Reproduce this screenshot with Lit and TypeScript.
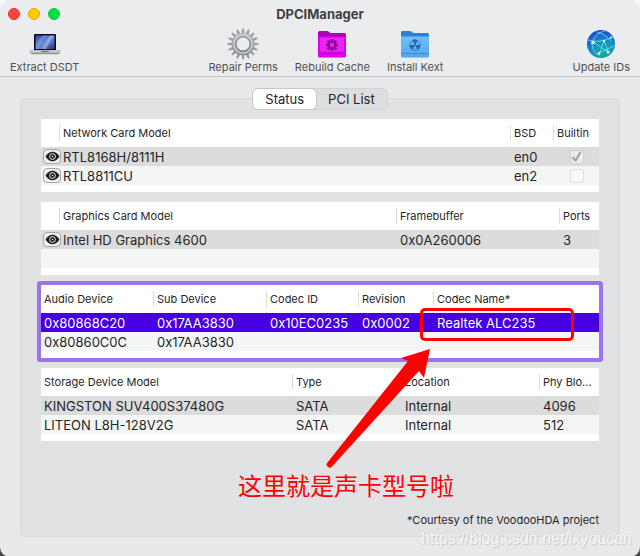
import { LitElement, html, svg, css, nothing } from "lit";
import { customElement, property, state } from "lit/decorators.js";
import { classMap } from "lit/directives/class-map.js";
import { styleMap } from "lit/directives/style-map.js";

type Cell = string | { eye: string } | { check: boolean; label: string };

interface Column {
  title: string;
  width?: number;
  kind?: "eye" | "check";
}

interface DeviceList {
  name: string;
  columns: Column[];
  rows: Cell[][];
}

const NETWORK: DeviceList = {
  name: "Network cards",
  columns: [
    { title: "", width: 19, kind: "eye" },
    { title: "Network Card Model" },
    { title: "BSD", width: 43 },
    { title: "Builtin", width: 45, kind: "check" },
  ],
  rows: [
    [{ eye: "RTL8168H/8111H" }, "RTL8168H/8111H", "en0", { check: true, label: "en0 built in" }],
    [{ eye: "RTL8811CU" }, "RTL8811CU", "en2", { check: false, label: "en2 built in" }],
  ],
};

const GRAPHICS: DeviceList = {
  name: "Graphics cards",
  columns: [
    { title: "", width: 19, kind: "eye" },
    { title: "Graphics Card Model" },
    { title: "Framebuffer", width: 163 },
    { title: "Ports", width: 39 },
  ],
  rows: [
    [{ eye: "Intel HD Graphics 4600" }, "Intel HD Graphics 4600", "0x0A260006", "3"],
    ["", "", "", ""],
  ],
};

const AUDIO: DeviceList = {
  name: "Audio devices",
  columns: [
    { title: "Audio Device", width: 113 },
    { title: "Sub Device", width: 113 },
    { title: "Codec ID", width: 92 },
    { title: "Revision", width: 75 },
    { title: "Codec Name*" },
  ],
  rows: [
    ["0x80868C20", "0x17AA3830", "0x10EC0235", "0x0002", "Realtek ALC235"],
    ["0x80860C0C", "0x17AA3830", "", "", ""],
  ],
};

const STORAGE: DeviceList = {
  name: "Storage devices",
  columns: [
    { title: "Storage Device Model" },
    { title: "Type", width: 109 },
    { title: "Location", width: 138 },
    { title: "Phy Blo...", width: 59 },
  ],
  rows: [
    ["KINGSTON SUV400S37480G", "SATA", "Internal", "4096"],
    ["LITEON L8H-128V2G", "SATA", "Internal", "512"],
  ],
};

@customElement("device-table")
export class DeviceTable extends LitElement {
  @property({ attribute: false }) list!: DeviceList;
  @property({ type: Boolean }) focused = false;

  static styles = css`
    :host {
      display: block;
      background: #fff;
      padding-bottom: 7px;
    }
    :host([focused]) {
      box-shadow: 0 0 0 4px #9a73ee;
      border-radius: 1px;
    }
    .table {
      width: 100%;
      table-layout: fixed;
      border-collapse: collapse;
    }
    .head,
    .cell {
      box-sizing: border-box;
      padding: 0 0 0 3px;
      text-align: left;
      white-space: nowrap;
    }
    .head {
      height: 28px;
      font-size: 11px;
      font-weight: 400;
      line-height: 16px;
      color: #262626;
      background:
        linear-gradient(#dcdcdc, #dcdcdc) right 6px / 1px 16px no-repeat,
        linear-gradient(#dcdcdc, #dcdcdc) right bottom / 1px 1px no-repeat;
    }
    .head:last-child {
      background: none;
    }
    .cell {
      height: 19px;
      padding-top: 2px;
      font-size: 13px;
      line-height: 17px;
      color: #262626;
    }
    .row {
      background: #f4f5f5;
    }
    .row.selected {
      background: #dcdcdc;
    }
    .row.active {
      background: #4600e1;
    }
    .row.active .cell {
      color: #fff;
    }
    .cell.eye {
      padding: 0 0 0 2px;
    }
    .cell.check {
      padding: 0;
      text-align: center;
    }
    .eye-button {
      display: flex;
      align-items: center;
      justify-content: center;
      box-sizing: border-box;
      width: 18px;
      height: 15px;
      margin: 0;
      padding: 0;
      border: 1px solid #a6a6a6;
      border-radius: 4px;
      background: #eeefef;
      color: #1d1d1d;
    }
    .eye-icon {
      display: block;
      width: 15px;
      height: 11px;
      flex: none;
    }
    .tick {
      appearance: none;
      display: block;
      box-sizing: border-box;
      width: 14px;
      height: 14px;
      margin: 0 auto;
      border: 1px solid #dedede;
      border-radius: 3px;
      background: #f9f9f9;
    }
    .tick:checked {
      border-color: #cfcfcf;
      background: #ededed;
    }
    .tick:checked::before {
      content: "";
      display: block;
      width: 12px;
      height: 12px;
      background: #a6a6a6;
      clip-path: polygon(9px 1px, 11px 2px, 6px 11px, 4px 11px, 1px 7px, 3px 6px, 5px 8px);
    }
  `;

  private renderCell(cell: Cell) {
    if (typeof cell === "string") return cell || nothing;
    if ("eye" in cell) {
      return html`<button class="eye-button" aria-label="Show ${cell.eye}">
        <svg class="eye-icon" viewBox="0 0 15 11" aria-hidden="true">
          <path d="M.5 5.500C2.300 2.300 4.700.700 7.500.700s5.200 1.600 7 4.800c-1.800 3.200-4.200 4.800-7 4.800S2.300 8.700.5 5.500Z" fill="currentColor" />
          <circle cx="7.500" cy="5.500" r="2.900" fill="none" stroke="#eeefef" stroke-width="1" />
          <circle cx="7.500" cy="5.500" r=".8" fill="#eeefef" />
        </svg>
      </button>`;
    }
    return html`<input class="tick" type="checkbox" disabled aria-label=${cell.label} .checked=${cell.check} />`;
  }

  render() {
    const { name, columns, rows } = this.list;
    return html`<table class="table" aria-label=${name}>
      <colgroup>
        ${columns.map((c) => html`<col style=${styleMap(c.width ? { width: `${c.width}px` } : {})} />`)}
      </colgroup>
      <thead>
        <tr>${columns.map((c) => html`<th class="head" scope="col">${c.title}</th>`)}</tr>
      </thead>
      <tbody>
        ${rows.map(
          (row, r) => html`<tr class=${classMap({ row: true, selected: r === 0, active: r === 0 && this.focused })}>
            ${row.map(
              (cell, i) => html`<td
                class=${classMap({ cell: true, eye: columns[i].kind === "eye", check: columns[i].kind === "check" })}
              >${this.renderCell(cell)}</td>`,
            )}
          </tr>`,
        )}
      </tbody>
    </table>`;
  }
}

const GEAR_TEETH = Array.from({ length: 16 }, (_, i) => i * 22.5);
const CACHE_TEETH = Array.from({ length: 8 }, (_, i) => i * 45);

const laptopIcon = html`<svg class="icon" viewBox="0 0 32 32" aria-hidden="true">
  <defs>
    <linearGradient id="screen" x1="0" y1="0" x2="1" y2="1">
      <stop offset="0" stop-color="#3a3fa8" />
      <stop offset=".5" stop-color="#6a8bd8" />
      <stop offset="1" stop-color="#2b2f86" />
    </linearGradient>
    <linearGradient id="base" x1="0" y1="0" x2="0" y2="1">
      <stop offset="0" stop-color="#ececec" />
      <stop offset="1" stop-color="#8d8d8d" />
    </linearGradient>
  </defs>
  <path d="M5 7Q5 6 6 6H26q1 0 1 1V22H5Z" fill="#0c0c12" />
  <rect x="6.500" y="7.500" width="19" height="13.500" fill="url(#screen)" />
  <path d="M12 21 21 7.500h3.500L17 21Z" fill="#a9c4f0" opacity=".55" />
  <path d="M7 14.500q5-5 8-7h3Q12 13.500 9 21H7Z" fill="#8fb0ec" opacity=".4" />
  <path d="M1 22.500h30v2q-1 1.500-3 1.500H4Q2 26 1 24.500Z" fill="url(#base)" stroke="#7b7b7b" stroke-width=".4" />
  <rect x="12" y="23" width="8" height="1" rx=".5" fill="#6c6c6c" />
</svg>`;

const gearIcon = html`<svg class="icon" viewBox="0 0 32 32" aria-hidden="true">
  <defs>
    <linearGradient id="steel" x1="0" y1="0" x2="0" y2="1">
      <stop offset="0" stop-color="#b7bcc1" />
      <stop offset="1" stop-color="#85898e" />
    </linearGradient>
  </defs>
  <g fill="#9a9fa4">
    ${GEAR_TEETH.map((a) => svg`<path d="M14.300 6 15.200.4h1.600L17.700 6Z" transform="rotate(${a} 16 16)" />`)}
  </g>
  <circle cx="16" cy="16" r="9" fill="none" stroke="url(#steel)" stroke-width="4.600" />
  <circle cx="16" cy="16" r="9.200" fill="none" stroke="#c9cdd1" stroke-width="1.600" />
  <circle cx="16" cy="16" r="7" fill="none" stroke="#777b80" stroke-width=".8" />
</svg>`;

const cacheIcon = html`<svg class="icon" viewBox="0 0 32 32" aria-hidden="true">
  <path d="M2 4.500Q2 3 3.500 3H11q1 0 2 1t2 1H28.500Q30 5 30 6.500V27H2Z" fill="#ab00b5" />
  <path d="M2 8.500H30V28q0 1.500-1.500 1.500h-25Q2 29.500 2 28Z" fill="#de00ea" />
  <rect x="4" y="9.500" width="24" height="14" fill="#f23cf6" opacity=".6" />
  <rect x="2" y="25" width="28" height="1" fill="#b800c2" />
  <g fill="#8f009c">
    ${CACHE_TEETH.map((a) => svg`<rect x="14.700" y="11" width="2.600" height="3" transform="rotate(${a} 16 17)" />`)}
  </g>
  <circle cx="16" cy="17" r="3.300" fill="none" stroke="#8f009c" stroke-width="2.200" />
</svg>`;

const kextIcon = html`<svg class="icon" viewBox="0 0 32 32" aria-hidden="true">
  <defs>
    <linearGradient id="folder" x1="0" y1="0" x2="0" y2="1">
      <stop offset="0" stop-color="#6fc0fa" />
      <stop offset="1" stop-color="#55a5ec" />
    </linearGradient>
  </defs>
  <path d="M2 4.500Q2 3 3.500 3H11q1 0 2 1t2 1H28.500Q30 5 30 6.500V27H2Z" fill="#2d7fd0" />
  <path d="M2 8.500H30V28q0 1.500-1.500 1.500h-25Q2 29.500 2 28Z" fill="url(#folder)" />
  <rect x="2" y="25" width="28" height="1" fill="#3c8ad6" />
  <circle cx="16" cy="17" r="5.200" fill="none" stroke="#2f77bd" stroke-width=".9" />
  <g fill="#2766a8">
    <path d="M15.400 16 13.300 12.400a5.300 5.300 0 0 1 5.400 0L16.600 16Z" />
    <path d="M15.400 16 13.300 12.400a5.300 5.300 0 0 1 5.400 0L16.600 16Z" transform="rotate(120 16 17)" />
    <path d="M15.400 16 13.300 12.400a5.300 5.300 0 0 1 5.400 0L16.600 16Z" transform="rotate(240 16 17)" />
    <circle cx="16" cy="17" r=".9" />
  </g>
</svg>`;

const globeIcon = html`<svg class="icon" viewBox="0 0 32 32" aria-hidden="true">
  <defs>
    <radialGradient id="globe" cx=".6" cy=".8" r=".85">
      <stop offset="0" stop-color="#0fb09a" />
      <stop offset=".5" stop-color="#1391c4" />
      <stop offset="1" stop-color="#2440cf" />
    </radialGradient>
  </defs>
  <circle cx="16" cy="16" r="14" fill="url(#globe)" />
  <g fill="none" stroke="#7fdcf8" stroke-width=".8" stroke-linecap="round">
    <path d="M3 12Q14 16 28 9" />
    <path d="M7 15Q10 5 20 3" />
    <path d="M8 14 25 25" />
    <path d="M19 13 14 27" />
    <path d="M19 13Q23 20 23 26" />
    <path d="M7 15Q7 22 12 27" />
    <path d="M12 4Q20 6 26 13" />
    <path d="M13 25Q21 22 29 18" />
  </g>
  <g fill="#d9fbff">
    <circle cx="8" cy="14.500" r="1.800" />
    <circle cx="19" cy="13" r="1.200" />
    <circle cx="14" cy="25.500" r="1.400" />
    <circle cx="23" cy="24" r="1.400" />
    <circle cx="26" cy="9.500" r="1.100" />
  </g>
</svg>`;

@customElement("app-root")
export class AppRoot extends LitElement {
  @state() private tab = "Status";

  static styles = css`
    :host {
      display: block;
      background: linear-gradient(#f8f8f8 50%, #4b4b4b 50%);
      font-family: Inter, "Noto Sans CJK SC", sans-serif;
      color: #262626;
    }
    .window {
      position: relative;
      min-height: 100vh;
      box-sizing: border-box;
      border-radius: 10px;
      overflow: hidden;
      background: #e8e9eb;
    }
    .chrome {
      background: #ebecee;
      border-bottom: 1px solid #c3c4c6;
    }
    .titlebar {
      display: grid;
      grid-template-columns: 1fr auto 1fr;
      align-items: center;
      height: 28px;
      padding: 0 8px;
    }
    .lights {
      display: flex;
      gap: 8px;
    }
    .light {
      box-sizing: border-box;
      width: 12px;
      height: 12px;
      padding: 0;
      border: 1px solid;
      border-radius: 50%;
    }
    .close {
      background: #ff453e;
      border-color: #e2302c;
    }
    .minimise {
      background: #fccb02;
      border-color: #dfa80a;
    }
    .zoom {
      background: #03e046;
      border-color: #12c53c;
    }
    .title {
      margin: 0;
      font-size: 13px;
      font-weight: 700;
      line-height: 16px;
      color: #404040;
    }
    .toolbar {
      display: flex;
      justify-content: space-between;
      padding: 0 10px 2px;
    }
    .group {
      display: flex;
      gap: 17px;
    }
    .tool {
      display: flex;
      flex-direction: column;
      align-items: center;
      padding: 0;
      border: 0;
      background: none;
      font: inherit;
      font-size: 11px;
      line-height: 14px;
      color: #505153;
    }
    .icon {
      display: block;
      width: 32px;
      height: 32px;
    }
    .content {
      display: flex;
      flex-direction: column;
      padding: 11px 20px 20px;
    }
    .tabs {
      position: relative;
      display: flex;
      align-self: center;
      box-sizing: border-box;
      height: 22px;
      border: 1px solid #d0d1d3;
      border-radius: 6px;
      background: #dddee0;
    }
    .tab {
      margin: -1px;
      padding: 0 12px;
      border: 1px solid transparent;
      border-radius: 6px;
      background: none;
      font: inherit;
      font-size: 13px;
      line-height: 20px;
      color: #262626;
    }
    .tab.current {
      background: #fff;
      border-color: #c6c7c9;
    }
    .panel {
      display: flex;
      flex-direction: column;
      gap: 10px;
      margin-top: -12px;
      padding: 20px 20px 8px;
      border: 1px solid #d6d7d9;
      border-radius: 5px;
      background: #e1e2e4;
    }
    .audio {
      position: relative;
    }
    .highlight {
      position: absolute;
      left: 379px;
      top: 23px;
      box-sizing: border-box;
      width: 154px;
      height: 33px;
      border: 3px solid #fe0000;
      border-radius: 5px;
    }
    .arrow {
      position: absolute;
      left: 284px;
      top: 62px;
      width: 110px;
      height: 122px;
      z-index: 1;
    }
    .remark {
      position: absolute;
      left: 197px;
      top: 182px;
      margin: 0;
      font-family: "Noto Sans CJK SC", sans-serif;
      font-size: 24px;
      font-weight: 400;
      line-height: 36px;
      white-space: nowrap;
      color: #fe0000;
    }
    .footnote {
      margin: 61px 0 0;
      font-size: 11px;
      line-height: 16px;
      text-align: right;
    }
    .watermark {
      position: absolute;
      right: 8px;
      bottom: 8px;
      font-family: "Liberation Sans", Arial, sans-serif;
      font-size: 16px;
      line-height: 20px;
      color: #f4f5f6;
      text-shadow: 1px 1px 1px #c4c5c7;
    }
  `;

  private tool(label: string, icon: unknown) {
    return html`<button class="tool">${icon}<span>${label}</span></button>`;
  }

  render() {
    return html`<main class="window">
      <header class="chrome">
        <div class="titlebar">
          <div class="lights">
            <button class="light close" aria-label="Close"></button>
            <button class="light minimise" aria-label="Minimise"></button>
            <button class="light zoom" aria-label="Zoom"></button>
          </div>
          <h1 class="title">DPCIManager</h1>
        </div>
        <div class="toolbar">
          ${this.tool("Extract DSDT", laptopIcon)}
          <div class="group">
            ${this.tool("Repair Perms", gearIcon)} ${this.tool("Rebuild Cache", cacheIcon)}
            ${this.tool("Install Kext", kextIcon)}
          </div>
          ${this.tool("Update IDs", globeIcon)}
        </div>
      </header>
      <div class="content">
        <div class="tabs" role="tablist">
          ${["Status", "PCI List"].map(
            (t) => html`<button
              class=${classMap({ tab: true, current: this.tab === t })}
              role="tab"
              aria-selected=${this.tab === t ? "true" : "false"}
              @click=${() => (this.tab = t)}
            >${t}</button>`,
          )}
        </div>
        <section class="panel" role="tabpanel">
          <device-table .list=${NETWORK}></device-table>
          <device-table .list=${GRAPHICS}></device-table>
          <div class="audio">
            <device-table .list=${AUDIO} focused></device-table>
            <div class="highlight"></div>
            <svg class="arrow" viewBox="0 0 110 122" aria-hidden="true">
              <path d="M105 2 76 11 83 14 2.500 115.500A3 3 0 0 0 7 119.500L94 24 99 31Z" fill="#fe0000" />
            </svg>
            <p class="remark">这里就是声卡型号啦</p>
          </div>
          <device-table .list=${STORAGE}></device-table>
          <p class="footnote">*Courtesy of the VoodooHDA project</p>
        </section>
      </div>
      <div class="watermark">https://blog.csdn.net/lxyoucan</div>
    </main>`;
  }
}
